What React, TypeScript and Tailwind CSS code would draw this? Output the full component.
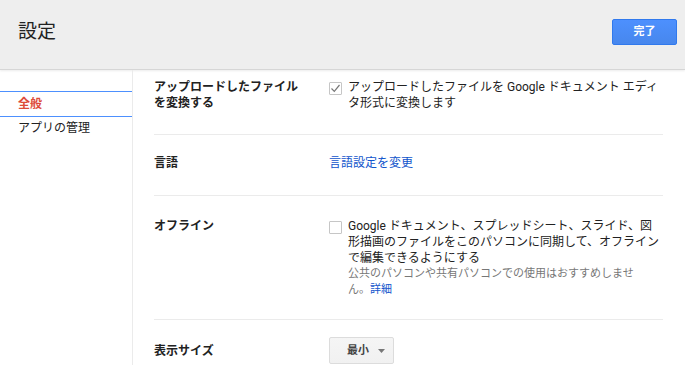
const SIDE_ITEMS = [
  { label: "全般", active: true },
  { label: "アプリの管理", active: false },
];

function Checkbox({ checked }: { checked?: boolean }) {
  return (
    <span className="mt-[3px] flex h-[13px] w-[13px] shrink-0 items-center justify-center rounded-[1px] border border-[#c6c6c6] bg-white">
      {checked && (
        <svg width="11" height="11" viewBox="0 0 11 11" fill="none">
          <path d="M1.5 5.5 L4.3 8.3 L9.5 2" stroke="#777" strokeWidth="1.2" />
        </svg>
      )}
    </span>
  );
}

export default function App() {
  return (
    <div className="h-[365px] w-[685px] overflow-hidden bg-white font-[Roboto,'Noto_Sans_CJK_JP',sans-serif] text-[12px] leading-[16px] text-[#222]">
      <header className="flex h-[70px] items-start justify-between border-b border-[#d6d6d6] bg-[#eeeeee] pl-[18px] pr-[8px] pt-[19px] shadow-[0_1px_2px_rgba(0,0,0,0.08)]">
        <h1 className="flex h-[26px] items-center text-[19px] font-normal text-[#222]">設定</h1>
        <button className="flex h-[26px] w-[65px] items-center justify-center rounded-[2px] border border-[#3079ed] bg-gradient-to-b from-[#4d90fe] to-[#4787ed] text-[11px] font-bold text-white">
          完了
        </button>
      </header>

      <div className="flex h-[295px]">
        <nav className="w-[133px] shrink-0 border-r border-[#ebebeb] pt-[21px]">
          {SIDE_ITEMS.map((item) =>
            item.active ? (
              <div
                key={item.label}
                className="flex h-[26px] items-center border-y border-[#4d90fe] pl-[18px] font-bold text-[#dd4b39]"
              >
                {item.label}
              </div>
            ) : (
              <div key={item.label} className="flex h-[21px] items-center pl-[18px]">
                {item.label}
              </div>
            )
          )}
        </nav>

        <main className="flex-1 pl-[21px] pr-[22px]">
          <div className="flex border-b border-[#ebebeb] pb-[23px] pt-[9px]">
            <div className="w-[175px] shrink-0 pr-[25px] font-bold">アップロードしたファイルを変換する</div>
            <div className="flex gap-[6px]">
              <Checkbox checked />
              <p className="w-[315px]">アップロードしたファイルを Google ドキュメント エディタ形式に変換します</p>
            </div>
          </div>

          <div className="flex border-b border-[#ebebeb] pb-[24px] pt-[20px]">
            <div className="w-[175px] shrink-0 pr-[25px] font-bold">言語</div>
            <a className="text-[#1155cc]">言語設定を変更</a>
          </div>

          <div className="flex border-b border-[#ebebeb] pb-[21px] pt-[22px]">
            <div className="w-[175px] shrink-0 pr-[25px] font-bold">オフライン</div>
            <div className="flex gap-[6px]">
              <Checkbox />
              <div className="w-[315px]">
                <p>Google ドキュメント、スプレッドシート、スライド、図形描画のファイルをこのパソコンに同期して、オフラインで編集できるようにする</p>
                <p className="w-[295px] text-[11px] text-[#777]">
                  公共のパソコンや共有パソコンでの使用はおすすめしません。<a className="text-[#1155cc]">詳細</a>
                </p>
              </div>
            </div>
          </div>

          <div className="flex items-center pt-[17px]">
            <div className="w-[175px] shrink-0 pr-[25px] font-bold">表示サイズ</div>
            <button className="flex h-[27px] w-[65px] items-center rounded-[2px] border border-[#dcdcdc] bg-gradient-to-b from-[#f5f5f5] to-[#f1f1f1] pl-[17px] pr-[8px] text-[11px] font-bold text-[#444]">
              <span className="flex-1 text-left">最小</span>
              <svg width="7" height="4" viewBox="0 0 7 4">
                <path d="M0 0 H7 L3.5 4 Z" fill="#777" />
              </svg>
            </button>
          </div>
        </main>
      </div>
    </div>
  );
}
